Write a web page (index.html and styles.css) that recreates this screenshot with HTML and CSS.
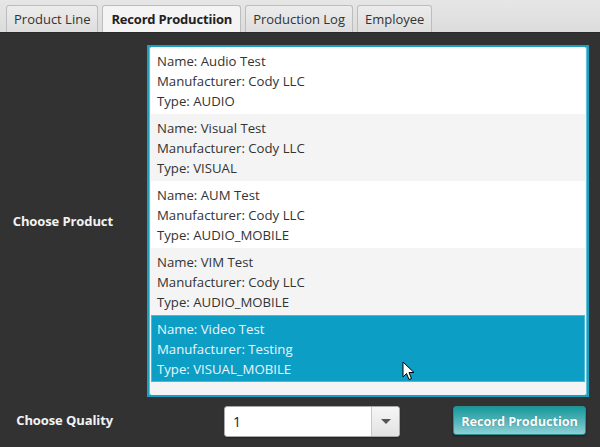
FILE: index.html
```html
<!DOCTYPE html>
<html>
<head>
<meta charset="utf-8">
<link rel="stylesheet" href="styles.css">
</head>
<body>
<div class="app">
  <div class="tabbar">
    <div class="tab">Product Line</div>
    <div class="tab selected">Record Productiion</div>
    <div class="tab">Production Log</div>
    <div class="tab">Employee</div>
  </div>
  <div class="content">
    <div class="label label-product">Choose Product</div>
    <div class="list">
      <div class="cell">
        <div>Name: Audio Test</div>
        <div>Manufacturer: Cody LLC</div>
        <div>Type: AUDIO</div>
      </div>
      <div class="cell odd">
        <div>Name: Visual Test</div>
        <div>Manufacturer: Cody LLC</div>
        <div>Type: VISUAL</div>
      </div>
      <div class="cell">
        <div>Name: AUM Test</div>
        <div>Manufacturer: Cody LLC</div>
        <div>Type: AUDIO_MOBILE</div>
      </div>
      <div class="cell odd">
        <div>Name: VIM Test</div>
        <div>Manufacturer: Cody LLC</div>
        <div>Type: AUDIO_MOBILE</div>
      </div>
      <div class="cell sel">
        <div>Name: Video Test</div>
        <div>Manufacturer: Testing</div>
        <div>Type: VISUAL_MOBILE</div>
        <svg class="cursor" width="14" height="21" viewBox="0 0 14 21"><path d="M1 1 L1 16 L4.5 12.5 L7 18.5 L9.5 17.5 L7 11.5 L12 11.5 Z" fill="#fff" stroke="#000" stroke-width="1" stroke-linejoin="round"/></svg>
      </div>
      <div class="filler"></div>
    </div>
    <div class="label label-quality">Choose Quality</div>
    <div class="controls">
      <div class="combo">
        <span class="combo-value">1</span>
        <span class="combo-arrow"><span class="tri"></span></span>
      </div>
      <button class="record">Record Production</button>
    </div>
  </div>
</div>
</body>
</html>
```
FILE: styles.css
```css
html, body {
  margin: 0;
  padding: 0;
}
body {
  width: 600px;
  height: 447px;
  overflow: hidden;
  background: #323232;
  font-family: "Open Sans", "Noto Sans", sans-serif;
}
.app {
  display: flex;
  flex-direction: column;
  height: 447px;
}
.tabbar {
  height: 33px;
  box-sizing: border-box;
  background: linear-gradient(#e6e6e6, #dcdcdc);
  border-bottom: 1px solid #2a2a2a;
  display: flex;
  align-items: flex-end;
  padding-left: 6px;
  gap: 4px;
}
.tab {
  height: 27px;
  box-sizing: border-box;
  padding: 0 7px;
  display: flex;
  align-items: center;
  font-size: 13px;
  color: #333;
  border: 1px solid #bdbdbd;
  border-bottom: none;
  border-radius: 3px 3px 0 0;
  background: linear-gradient(#ececec, #dedede);
}
.tab.selected {
  background: #f4f4f4;
  font-weight: bold;
  color: #222;
  padding: 0 8px;
  letter-spacing: -0.2px;
}
.content {
  display: grid;
  grid-template-columns: 147px 442px;
  grid-template-rows: 352px 1fr;
  padding-top: 12px;
}
.label {
  color: #f2f2f2;
  font-weight: bold;
  font-size: 13px;
  text-align: right;
  padding-right: 34px;
  align-self: center;
  letter-spacing: -0.1px;
}
.label-quality {
  align-self: start;
  padding-top: 14px;
}
.list {
  box-sizing: border-box;
  border: 2px solid #1b9fc0;
  box-shadow: inset 0 0 0 1px #67c1d8;
  background: #f4f4f4;
  display: flex;
  flex-direction: column;
  padding: 0 2px;
}
.cell {
  height: 67px;
  flex: none;
  box-sizing: border-box;
  padding: 4px 6px 0 6px;
  background: #ffffff;
  color: #333;
  font-size: 13.2px;
  line-height: 20px;
  position: relative;
}
.cell.odd {
  background: #f4f4f4;
}
.cell.sel {
  background: #0d9ec6;
  color: #eaf6fa;
  box-shadow: inset 0 0 0 1px #4db7d6;
}
.filler {
  flex: 1;
  background: #f4f4f4;
}
.cursor {
  position: absolute;
  left: 251px;
  top: 46px;
}
.controls {
  display: flex;
  align-items: flex-start;
  padding-top: 9px;
}
.combo {
  margin-left: 77px;
  width: 176px;
  height: 31px;
  box-sizing: border-box;
  border: 1px solid #a9a9a9;
  border-radius: 3px;
  background: #fff;
  display: flex;
  box-shadow: 0 1px 1px rgba(0,0,0,0.3);
}
.combo-value {
  flex: 1;
  padding-left: 8px;
  font-size: 14px;
  line-height: 29px;
  color: #222;
}
.combo-arrow {
  width: 27px;
  border-left: 1px solid #c8c8c8;
  background: linear-gradient(#f6f6f6, #e2e2e2);
  border-radius: 0 3px 3px 0;
  display: flex;
  align-items: center;
  justify-content: center;
}
.tri {
  width: 0;
  height: 0;
  border-left: 5px solid transparent;
  border-right: 5px solid transparent;
  border-top: 5px solid #555;
}
.record {
  margin-left: 53px;
  width: 133px;
  height: 29px;
  border: 1px solid #2a8f91;
  border-radius: 3px;
  background: linear-gradient(#16999a, #5ab8bd 60%, #8fd0d5);
  color: #fff;
  font-family: "Open Sans", "Noto Sans", sans-serif;
  font-weight: bold;
  font-size: 12.8px;
  letter-spacing: -0.1px;
  padding: 0;
  text-shadow: 0 0 1px rgba(0,0,0,0.4);
  box-shadow: 0 1px 2px rgba(0,0,0,0.5);
}
```
